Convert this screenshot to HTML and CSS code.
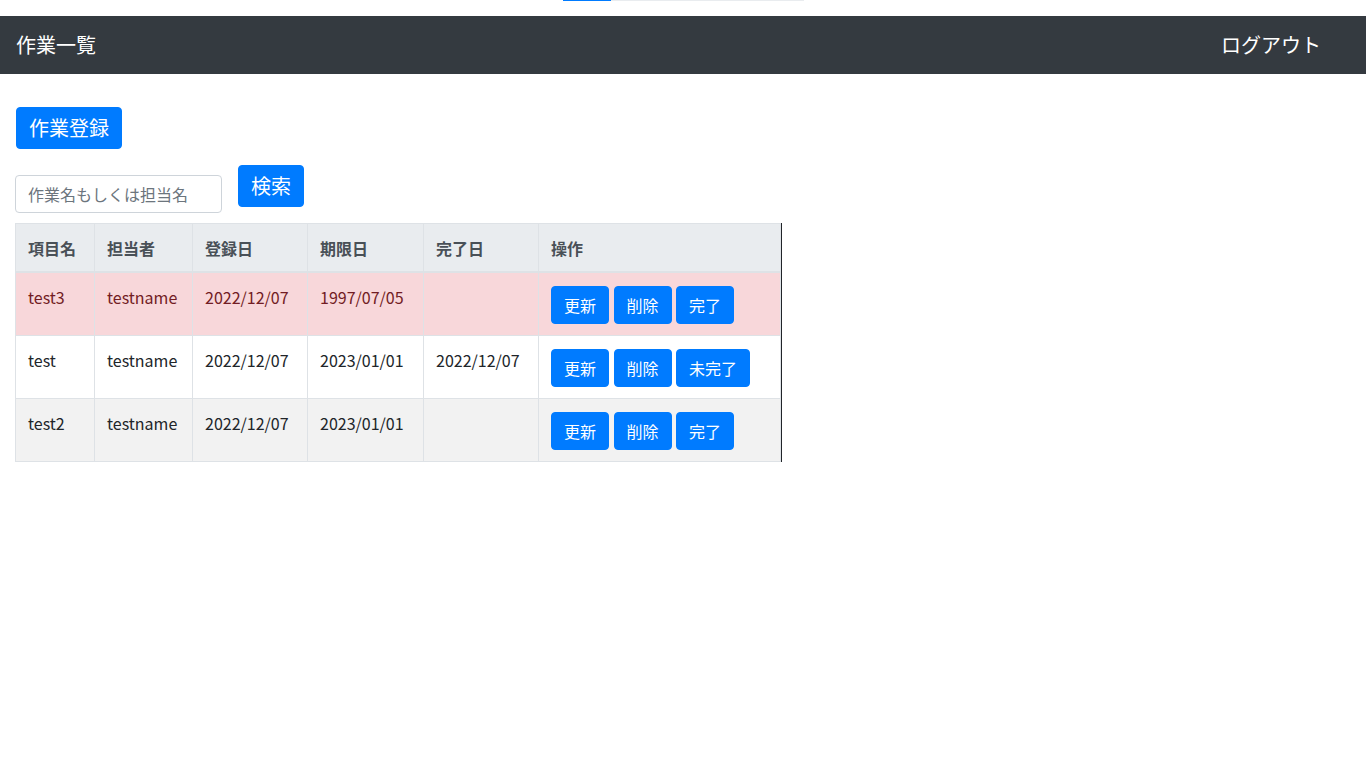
FILE: index.html
```html
<!DOCTYPE html>
<html lang="ja">
<head>
<meta charset="utf-8">
<title>作業一覧</title>
<link rel="stylesheet" href="styles.css">
</head>
<body>
<div class="loader">
  <div class="progress"><div class="progress-bar" style="width:20%"></div></div>
</div>
<header class="navbar">
  <span class="brand">作業一覧</span>
  <a class="logout" href="#">ログアウト</a>
</header>
<main class="content">
  <button class="btn btn-lg btn-register">作業登録</button>
  <form class="search">
    <input class="search-input" type="text" placeholder="作業名もしくは担当名">
    <button class="btn btn-lg" type="button">検索</button>
  </form>
  <div class="table-wrap">
    <table class="tasks">
      <thead>
        <tr>
          <th class="c1">項目名</th>
          <th class="c2">担当者</th>
          <th class="c3">登録日</th>
          <th class="c4">期限日</th>
          <th class="c5">完了日</th>
          <th class="c6">操作</th>
        </tr>
      </thead>
      <tbody>
        <tr class="danger">
          <td>test3</td>
          <td>testname</td>
          <td>2022/12/07</td>
          <td>1997/07/05</td>
          <td></td>
          <td class="ops"><button class="btn">更新</button><button class="btn">削除</button><button class="btn">完了</button></td>
        </tr>
        <tr>
          <td>test</td>
          <td>testname</td>
          <td>2022/12/07</td>
          <td>2023/01/01</td>
          <td>2022/12/07</td>
          <td class="ops"><button class="btn">更新</button><button class="btn">削除</button><button class="btn">未完了</button></td>
        </tr>
        <tr class="striped">
          <td>test2</td>
          <td>testname</td>
          <td>2022/12/07</td>
          <td>2023/01/01</td>
          <td></td>
          <td class="ops"><button class="btn">更新</button><button class="btn">削除</button><button class="btn">完了</button></td>
        </tr>
      </tbody>
    </table>
  </div>
</main>
</body>
</html>
```
FILE: styles.css
```css
* { box-sizing: border-box; }
html, body { margin: 0; padding: 0; background: #fff; }
body {
  font-family: "Noto Sans CJK JP", sans-serif;
  font-size: 16px;
  line-height: 24px;
  color: #212529;
}
.loader {
  height: 16px;
  display: flex;
  justify-content: center;
}
.progress {
  width: 241px;
  height: 1px;
  background: #e9ecef;
  display: flex;
}
.progress-bar { background: #007bff; height: 1px; }
.navbar {
  height: 58px;
  background: #343a40;
  display: flex;
  align-items: center;
  justify-content: space-between;
  padding: 0 45px 0 16px;
  color: #fff;
}
.brand { font-size: 20px; line-height: 28px; }
.logout { color: #fff; text-decoration: none; font-size: 20px; line-height: 28px; }
.content { padding: 33px 15px 0 15px; }
.btn {
  font-family: inherit;
  background: #007bff;
  color: #fff;
  border: 1px solid #007bff;
  border-radius: 4px;
  font-size: 16px;
  line-height: 24px;
  height: 38px;
  padding: 0 12px;
  cursor: pointer;
}
.btn-lg {
  font-size: 20px;
  line-height: 28px;
  height: 42px;
  padding: 0 12px;
}
.btn-register { margin-left: 1px; display: block; }
.search {
  display: flex;
  align-items: flex-start;
  gap: 16px;
  margin-top: 16px;
}
.search-input {
  margin-top: 10px;
  width: 207px;
  height: 38px;
  border: 1px solid #ced4da;
  border-radius: 4px;
  padding: 0 12px;
  font-family: inherit;
  font-size: 16px;
  color: #495057;
}
.search-input::placeholder { color: #6c757d; }
.table-wrap {
  margin-top: 10px;
  display: inline-block;
  vertical-align: top;
  border-right: 1px solid #212529;
}
.tasks {
  width: 765px;
  border-collapse: collapse;
  table-layout: fixed;
}
.tasks th, .tasks td {
  border: 1px solid #dee2e6;
  padding: 12px;
  text-align: left;
  vertical-align: top;
  white-space: nowrap;
}
.tasks th {
  background: #e9ecef;
  color: #495057;
  font-weight: 700;
  border-bottom-width: 2px;
  padding-bottom: 11px;
}
.tasks td { height: 63px; }
.c1 { width: 79px; }
.c2 { width: 98px; }
.c3 { width: 115px; }
.c4 { width: 116px; }
.c5 { width: 115px; }
.c6 { width: 242px; }
.tasks tr.danger td { background: #f8d7da; color: #721c24; }
.tasks tr.striped td { background: #f2f2f2; }
.tasks td.ops { padding-top: 13px; padding-bottom: 11px; }
.ops .btn { margin-right: 4.5px; vertical-align: top; padding: 0 12px; }
```
